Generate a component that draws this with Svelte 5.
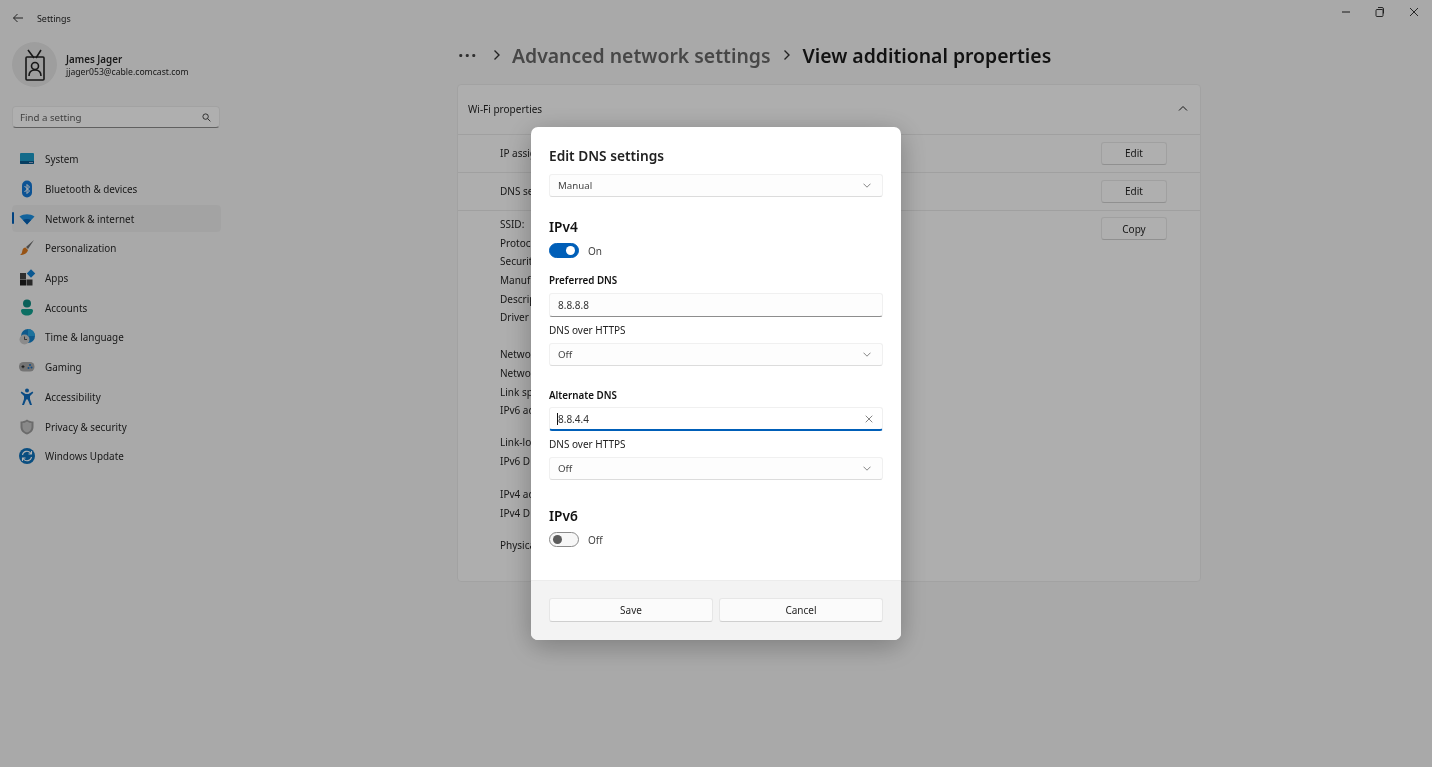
<script>
  const nav = ['System','Bluetooth & devices','Network & internet','Personalization','Apps','Accounts','Time & language','Gaming','Accessibility','Privacy & security','Windows Update'];
  const groups = [
    ['SSID:','Protocol:','Security','Manufact','Descript','Driver ver'],
    ['Network','Network','Link speed','IPv6 addr'],
    ['Link-local','IPv6 DNS'],
    ['IPv4 addr','IPv4 DNS'],
    ['Physical']
  ];
</script>

<div class="window">
  <aside class="sidebar">
    <div class="titlebar">
      <svg class="back" width="12" height="12" viewBox="0 0 12 12"><path d="M11 6H1.500M5.500 2 1.500 6l4 4" fill="none" stroke="#333" stroke-width="1"/></svg>
      <span class="apptitle">Settings</span>
    </div>
    <div class="profile">
      <div class="avatar">
        <svg width="24" height="32" viewBox="0 0 24 32" fill="none" stroke="#222" stroke-width="1.600">
          <path d="M5 1l6 8M18 1l-5 8"/>
          <rect x="3" y="8" width="18" height="23" rx="1"/>
          <circle cx="12" cy="17" r="3.500"/>
          <path d="M6 27c0-4 2.500-6 6-6s6 2 6 6"/>
        </svg>
      </div>
      <div class="who">
        <div class="name">James Jager</div>
        <div class="mail">jjager053@cable.comcast.com</div>
      </div>
    </div>
    <div class="search">
      <span>Find a setting</span>
      <svg width="9" height="9" viewBox="0 0 10 10" fill="none" stroke="#333" stroke-width="1"><circle cx="4" cy="4" r="3"/><path d="M6.200 6.200 9.300 9.300"/></svg>
    </div>
    <nav class="nav">
      {#each nav as item, i}
        <div class="item" class:active={i === 2}>
          {#if i === 2}<span class="marker"></span>{/if}
          <svg class="ico" width="18" height="18" viewBox="0 0 18 18">
            {#if i === 0}
              <rect x="2" y="3" width="14" height="11" rx="1" fill="#1c9ac6"/><path d="M2 11h14v2a1 1 0 0 1-1 1H3a1 1 0 0 1-1-1z" fill="#0a5a8c"/><rect x="11" y="12" width="4" height="1" fill="#9ac"/>
            {:else if i === 1}
              <rect x="4" y="0.500" width="10" height="17" rx="5" fill="#1478d4"/><path d="M6.500 6l5 5-2.500 2.500v-9L11.500 7l-5 5" fill="none" stroke="#fff" stroke-width="1"/>
            {:else if i === 2}
              <path d="M1.500 6.500c4.500-3 10.500-3 15 0L9 14.500z" fill="#1a8fe0"/><path d="M5 10c2.500-1.300 5.500-1.300 8 0L9 14.500z" fill="#075fb0"/>
            {:else if i === 3}
              <path d="M16 1 8 8l2 2z" fill="#6d6d6d"/><path d="M7.500 8.500 10 11c-.5 3-4 5-8 5 2-1 2-3 2.500-5 .4-1.500 1.500-2.500 3-2.500z" fill="#d8781e"/>
            {:else if i === 4}
              <rect x="2" y="4" width="6" height="6" fill="#444"/><rect x="2" y="10.500" width="6" height="6" fill="#1f1f1f"/><rect x="8.500" y="10.500" width="6" height="6" fill="#3a3a3a"/><rect x="10" y="1.500" width="6" height="6" transform="rotate(45 13 4.500)" fill="#0f7fd0"/>
            {:else if i === 5}
              <circle cx="9" cy="4.500" r="4" fill="#0e8a80"/><path d="M3 11.500a1.500 1.500 0 0 1 1.500-1.500h9a1.500 1.500 0 0 1 1.500 1.500c0 3-2.500 5-6 5s-6-2-6-5z" fill="#12a08f"/>
            {:else if i === 6}
              <circle cx="10" cy="8" r="7" fill="#1580c8"/><path d="M10 1a7 7 0 0 1 7 7h-7z" fill="#2aa4e0"/><circle cx="6.500" cy="11.500" r="5" fill="#c8c8c8"/><path d="M6.500 8.500v3h2.500" fill="none" stroke="#333" stroke-width=".8"/>
            {:else if i === 7}
              <rect x="1" y="4" width="15.500" height="9.500" rx="4.500" fill="#a6a6a6"/><path d="M3.500 8.700h3M5 7.200v3" stroke="#222" stroke-width="1"/><circle cx="12" cy="7" r="1" fill="#1a6fc0"/><circle cx="10.500" cy="10" r="1" fill="#1a6fc0"/><circle cx="13.500" cy="9.500" r="1" fill="#1a6fc0"/>
            {:else if i === 8}
              <circle cx="9" cy="2.500" r="2" fill="#0f6cbd"/><path d="M3.500 3.500l4 2.500h3l4-2.500.8 1.300L12 8v3l2 6h-2l-2.200-5.500H8.200L6 17H4l2-6V8L2.700 4.800z" fill="#0f6cbd"/>
            {:else if i === 9}
              <path d="M9 1.500c2 1.400 4.300 2.100 6.500 2.100V9c0 3.700-2.700 6.300-6.500 7.500C5.200 15.300 2.500 12.700 2.500 9V3.600C4.700 3.600 7 2.900 9 1.500z" fill="#9a9a9a"/><path d="M9 3.500c1.500 1 3 1.500 4.500 1.600V9c0 2.700-1.800 4.600-4.500 5.500C6.300 13.600 4.500 11.700 4.500 9V5.100C6 5 7.500 4.500 9 3.500z" fill="#c4c4c4"/>
            {:else}
              <circle cx="9" cy="9" r="8" fill="#0f70b8"/><path d="M4.500 8a4.500 4.500 0 0 1 8-2l1 1M13.500 10a4.500 4.500 0 0 1-8 2l-1-1M13.500 4v3h-3M4.500 14v-3h3" fill="none" stroke="#fff" stroke-width="1.100"/>
            {/if}
          </svg>
          <span>{item}</span>
        </div>
      {/each}
    </nav>
  </aside>

  <main class="main">
    <div class="controls">
      <svg width="12" height="12" viewBox="0 0 12 12"><path d="M2 6h8" stroke="#222" stroke-width="1"/></svg>
      <svg width="12" height="12" viewBox="0 0 12 12" fill="none" stroke="#222" stroke-width=".9"><rect x="2" y="3.500" width="7" height="7" rx="1"/><path d="M4 1.500h4a1.500 1.500 0 0 1 1.500 1.500v4.500"/></svg>
      <svg width="12" height="12" viewBox="0 0 12 12"><path d="M2 2l8 8M10 2 2 10" stroke="#222" stroke-width=".9"/></svg>
    </div>
    <div class="crumbs">
      <span class="dots">···</span>
      <svg class="sep" width="10" height="12" viewBox="0 0 10 12"><path d="M2.500 1.500 7 6l-4.500 4.500" fill="none" stroke="#333" stroke-width="1.400"/></svg>
      <span class="crumb">Advanced network settings</span>
      <svg class="sep" width="10" height="12" viewBox="0 0 10 12"><path d="M2.500 1.500 7 6l-4.500 4.500" fill="none" stroke="#333" stroke-width="1.400"/></svg>
      <span class="crumb current">View additional properties</span>
    </div>

    <section class="card">
      <header class="cardhead">
        <span>Wi-Fi properties</span>
        <svg width="10" height="7" viewBox="0 0 10 7"><path d="M1 5.500 5 1.500l4 4" fill="none" stroke="#222" stroke-width="1"/></svg>
      </header>
      <div class="row"><span>IP assig</span><button class="btn">Edit</button></div>
      <div class="row"><span>DNS se</span><button class="btn">Edit</button></div>
      <div class="details">
        <div class="lists">
          {#each groups as g}
            <div class="group">{#each g as line}<div class="line">{line}</div>{/each}</div>
          {/each}
        </div>
        <button class="btn copy">Copy</button>
      </div>
    </section>
  </main>
</div>

<div class="scrim">
  <div class="dialog">
    <div class="body">
      <h2>Edit DNS settings</h2>
      <div class="field select">
        <span>Manual</span>
        <svg width="8" height="5" viewBox="0 0 8 5"><path d="M.5.700 4 4.200 7.500.7" fill="none" stroke="#777" stroke-width=".9"/></svg>
      </div>

      <h3 class="v4">IPv4</h3>
      <div class="toggle-row">
        <span class="toggle on"><i></i></span><span>On</span>
      </div>
      <div class="label strong l1">Preferred DNS</div>
      <div class="field input"><span>8.8.8.8</span></div>
      <div class="label l2">DNS over HTTPS</div>
      <div class="field select">
        <span>Off</span>
        <svg width="8" height="5" viewBox="0 0 8 5"><path d="M.5.700 4 4.200 7.500.7" fill="none" stroke="#777" stroke-width=".9"/></svg>
      </div>

      <div class="label strong l3">Alternate DNS</div>
      <div class="field input focus">
        <span class="caret"></span><span>8.8.4.4</span>
        <svg class="clear" width="8" height="8" viewBox="0 0 8 8"><path d="M.7.7l6.600 6.600M7.300.7.7 7.300" stroke="#777" stroke-width=".9"/></svg>
      </div>
      <div class="label l2">DNS over HTTPS</div>
      <div class="field select">
        <span>Off</span>
        <svg width="8" height="5" viewBox="0 0 8 5"><path d="M.5.700 4 4.200 7.500.7" fill="none" stroke="#777" stroke-width=".9"/></svg>
      </div>

      <h3 class="v6">IPv6</h3>
      <div class="toggle-row">
        <span class="toggle"><i></i></span><span>Off</span>
      </div>
    </div>
    <footer class="foot">
      <button class="dbtn">Save</button>
      <button class="dbtn">Cancel</button>
    </footer>
  </div>
</div>

<style>
  :global(body) {
    margin: 0;
    background: #f3f3f3;
    font-family: "Noto Sans", "Open Sans", sans-serif;
    font-size: 10px;
    color: #262626;
    overflow: hidden;
  }
  .window { display: flex; height: 767px; width: 1432px; background: #f3f3f3; filter: blur(.35px); }

  .sidebar { width: 233px; flex: none; padding-left: 12px; box-sizing: border-box; }
  .titlebar { display: flex; align-items: center; height: 36px; }
  .back { margin-right: 13px; }
  .apptitle { font-size: 8.900px; }
  .profile { display: flex; align-items: center; gap: 9px; margin-top: 6px; height: 45px; }
  .avatar { width: 45px; height: 45px; border-radius: 50%; background: #e2e2e2; display: flex; align-items: center; justify-content: center; }
  .who { padding-top: 3px; }
  .name { font-weight: 600; font-size: 9.800px; line-height: 13px; }
  .mail { font-size: 8.650px; line-height: 13px; }
  .search {
    margin-top: 19px; width: 208px; height: 22px; box-sizing: border-box;
    display: flex; align-items: center; justify-content: space-between; padding: 0 8px 0 7px;
    background: #fbfbfb; border: 1px solid #e8e8e8; border-bottom-color: #8a8a8a; border-radius: 4px;
    color: #5c5c5c; font-size: 9.700px;
  }
  .nav { margin-top: 18px; width: 209px; display: flex; flex-direction: column; gap: 3px; }
  .item { position: relative; display: flex; align-items: center; height: 26.700px; padding-left: 6px; border-radius: 4px; font-size: 9.900px; }
  .item .ico { margin-right: 9px; flex: none; }
  .item.active { background: #eaeaea; }
  .marker { position: absolute; left: 0; top: 7px; height: 12px; width: 2px; background: #005fb8; border-radius: 1px; }

  .main { flex: 1; padding-left: 224px; padding-right: 231px; box-sizing: border-box; position: relative; }
  .controls { position: absolute; right: 12px; top: 6px; display: flex; gap: 22px; }
  .crumbs { display: flex; align-items: center; height: 30px; margin-top: 40px; }
  .dots { font-size: 20px; font-weight: 600; width: 35px; padding-left: 1px; box-sizing: border-box; color: #444; letter-spacing: 1px; }
  .sep { margin-right: 10px; }
  .crumb { font-size: 19.400px; font-weight: 600; color: #666; margin-right: 12px; white-space: nowrap; }
  .crumb.current { color: #1b1b1b; }

  .card {
    margin-top: 14px; height: 498px; box-sizing: border-box;
    background: #f9f9f9; border: 1px solid #e9e9e9; border-radius: 4px;
  }
  .cardhead { height: 49px; box-sizing: border-box; display: flex; align-items: center; justify-content: space-between; padding: 0 12px 2px 10px; font-size: 10px; }
  .row {
    height: 38px; box-sizing: border-box; border-top: 1px solid #e6e6e6;
    display: flex; align-items: center; justify-content: space-between; padding: 0 33px 1px 42px; font-size: 10px;
  }
  .btn {
    width: 66px; height: 23px; box-sizing: border-box; padding: 0;
    background: #fbfbfb; border: 1px solid #e6e6e6; border-bottom-color: #cfcfcf; border-radius: 3px;
    font: inherit; font-size: 10px; color: #262626;
  }
  .details { border-top: 1px solid #e6e6e6; display: flex; justify-content: space-between; padding: 4px 33px 0 42px; }
  .copy { margin-top: 2px; }
  .group { margin-bottom: 13.300px; }
  .group:first-child { margin-bottom: 18.300px; }
  .group:nth-child(3) { margin-bottom: 14.300px; }
  .line { height: 18.700px; line-height: 18.700px; font-size: 10px; }

  .scrim {
    position: fixed; inset: 0;
    background: rgba(0, 0, 0, .3);
    display: flex; align-items: center; justify-content: center;
  }
  .dialog {
    width: 370px; height: 513px; background: #fff; border-radius: 7px; overflow: hidden;
    box-shadow: 0 6px 28px rgba(0, 0, 0, .28);
    display: flex; flex-direction: column;
    filter: blur(.3px);
  }
  .body { flex: 1; padding: 0 18px; }
  h2 { font-size: 13.700px; font-weight: 600; margin: 19px 0 9px; line-height: 19px; color: #222; }
  h3 { font-size: 13.700px; font-weight: 600; margin: 0; line-height: 18px; color: #111; }
  .v4 { margin-top: 21px; }
  .v6 { margin-top: 27px; }
  .field {
    height: 23px; box-sizing: border-box; width: 334px;
    display: flex; align-items: center; justify-content: space-between; padding: 0 11px 0 8px;
    background: #fdfdfd; border: 1px solid #f0f0f0; border-bottom-color: #dcdcdc; border-radius: 3px;
    font-size: 9.700px; color: #444;
  }
  .input { border-bottom-color: #8d8d8d; height: 24px; color: #333; font-size: 10px; }
  .focus { border-bottom: 2px solid #005fb8; background: #fff; justify-content: flex-start; }
  .focus .caret { width: 1px; height: 12px; background: #111; margin-left: -1px; }
  .clear { margin-left: auto; margin-right: -2px; }
  .toggle-row { display: flex; align-items: center; gap: 9px; margin-top: 7px; font-size: 10px; color: #444; height: 15px; }
  .toggle {
    width: 30px; height: 15px; box-sizing: border-box; border-radius: 8px;
    border: 1px solid #8a8a8a; background: #f7f7f7; display: flex; align-items: center; padding: 0 3px;
  }
  .toggle i { width: 9px; height: 9px; border-radius: 50%; background: #5c5c5c; }
  .toggle.on { background: #005fb8; border-color: #005fb8; justify-content: flex-end; }
  .toggle.on i { background: #fff; }
  .label { line-height: 14px; font-size: 10px; color: #222; }
  .strong { font-weight: 600; color: #111; font-size: 9.800px; }
  .l1 { margin-top: 16px; margin-bottom: 5px; }
  .l2 { margin-top: 6px; margin-bottom: 6px; }
  .l3 { margin-top: 23px; margin-bottom: 4px; }
  .foot {
    height: 60px; flex: none; box-sizing: border-box; background: #f3f3f3; border-top: 1px solid #ececec;
    display: flex; gap: 6px; padding: 17px 18px 0;
  }
  .dbtn {
    width: 164px; height: 24px; padding: 0; box-sizing: border-box;
    background: #fbfbfb; border: 1px solid #e6e6e6; border-bottom-color: #cfcfcf; border-radius: 3px;
    font: inherit; font-size: 10px; color: #262626;
  }
</style>
